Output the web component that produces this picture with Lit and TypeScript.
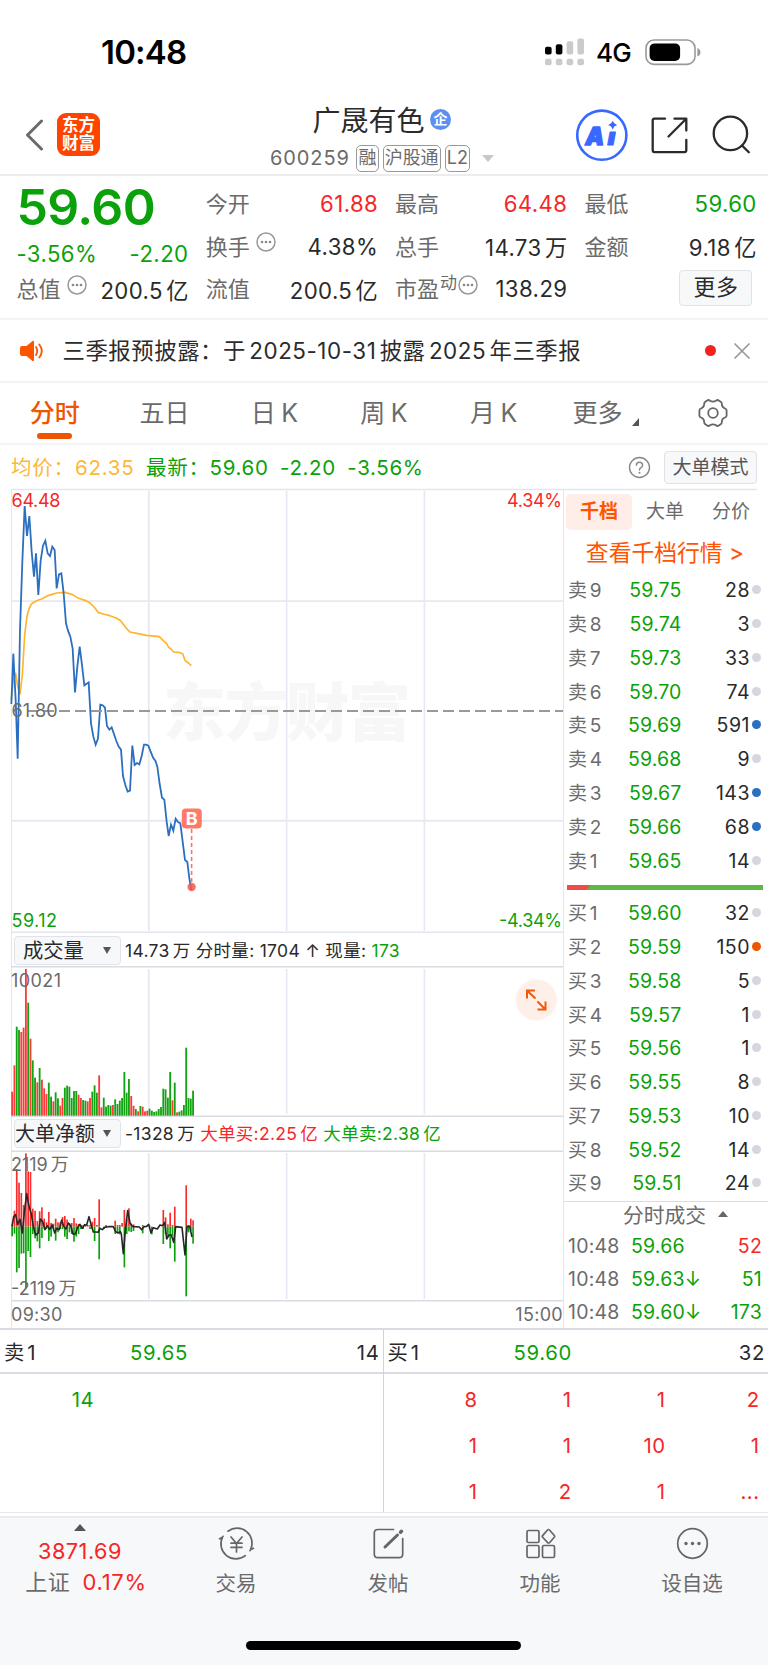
import { LitElement, html, svg, css } from "lit";
import { customElement, property } from "lit/decorators.js";

// Text with a small gap wherever a number meets a Chinese character.
const mix = (t: string) =>
  t.split(/(?<=[0-9A-Za-z])(?=[\u4e00-\u9fff])|(?<=[\u4e00-\u9fff])(?=[0-9A-Za-z])/).map(
    (part, i) => (i ? html`<span class="gap">${part}</span>` : part)
  );

const shared = css`
  * { box-sizing: border-box; }
  .gap { margin-left: 0.15em; }
  .red { color: #f62626; }
  .green { color: #0ba10b; }
  .dark { color: #2a2a2a; }
  svg { display: block; flex: none; }
`;

const barX = (i: number) => 36.5 + i * 6.87;

const price =
  "34,672 40,521 47,660 53,836 60,450 67,245 74,78 81,168 88,108 95,215 102,290 108,220 115,345 122,242 129,197 136,182 143,220 150,228 157,200 164,210 170,325 177,283 184,280 191,340 198,430 204,452 211,470 218,506 225,637 232,560 239,500 246,555 253,616 260,611 266,607 273,730 280,770 287,794 294,776 301,674 308,676 315,683 321,738 328,749 335,742 342,762 349,783 356,800 363,809 369,888 376,915 383,935 390,932 397,797 404,855 411,849 418,853 425,828 432,794 438,794 445,797 452,815 459,833 466,842 472,860 479,912 486,953 493,959 500,1025 506,1068 513,1034 520,1052 527,1016 534,1026 541,1030 548,1085 555,1140 562,1146 568,1195 574,1230";
const average =
  "34,660 40,600 47,580 53,620 60,642 67,585 74,465 81,408 88,384 95,371 105,365 115,360 125,357 143,347 157,343 170,339 195,337 218,344 232,353 245,358 258,362 270,369 285,384 294,397 310,402 330,407 350,415 362,422 370,433 380,446 390,456 410,460 440,466 478,470 490,482 500,491 506,502 513,507 521,516 540,518 548,521 555,541 565,549 574,557";
const volume =
  "r503 r424 g308 g318 r324 r311 r135 g236 r344 g409 g461 r475 g432 r467 r493 r510 g476 g518 r532 g505 g523 r545 r522 g491 g485 g488 g522 g501 g501 r512 r522 g528 g530 r532 r522 g503 g484 g506 r454 r550 g521 g548 g543 g545 r543 g526 g540 g530 g522 g444 g506 g465 r516 r545 g555 r562 g546 r548 r562 r560 g554 g560 g564 g562 g555 g549 g494 g496 g521 g444 r529 g476 r565 g563 g559 g543 g371 g522 g524 g500".split(" ");
const flow: Record<number, [number, number]> = {
  0: [318, 352], 1: [275, 344], 2: [150, 460], 3: [191, 447], 4: [222, 404], 5: [258, 403], 6: [103, 508], 7: [157, 396],
  8: [159, 414], 9: [269, 345], 10: [275, 358], 11: [306, 367], 12: [277, 388], 13: [265, 357], 14: [299, 328], 15: [310, 330],
  16: [279, 366], 17: [312, 353], 18: [314, 330], 19: [299, 365], 20: [310, 340], 21: [310, 330], 22: [294, 330], 23: [291, 353],
  24: [302, 360], 25: [312, 340], 26: [312, 345], 27: [297, 368], 28: [313, 353], 29: [315, 345], 30: [318, 330], 31: [318, 330],
  32: [318, 323], 33: [318, 323], 34: [318, 330], 35: [308, 330], 36: [297, 366], 37: [318, 323], 38: [241, 421], 40: [323, 330],
  41: [318, 326], 45: [305, 345], 46: [318, 342], 47: [318, 346], 48: [312, 323], 49: [273, 445], 50: [300, 345], 51: [268, 337],
  52: [314, 339], 53: [316, 336], 57: [318, 343], 60: [320, 323], 61: [323, 346], 66: [273, 375], 67: [295, 345], 68: [316, 350],
  69: [281, 388], 70: [318, 350], 71: [263, 428], 76: [199, 532], 77: [318, 340], 78: [299, 335], 79: [304, 374],
};
const net =
  "36,322 41,293 47,287 53,316 60,301 67,342 73,280 80,224 87,262 94,285 100,322 107,348 115,342 121,300 128,308 135,332 142,320 149,331 157,318 164,342 170,328 178,332 185,303 191,322 198,330 205,312 212,320 219,345 226,345 233,325 240,316 247,328 254,317 260,318 267,293 273,316 280,339 287,339 294,340 300,328 307,332 314,325 325,323 340,323 347,338 354,342 361,338 364,345 370,404 376,335 383,275 390,312 397,322 405,323 418,324 425,332 432,323 440,322 446,316 453,342 460,326 472,330 480,318 488,320 494,310 500,360 507,348 514,348 521,370 527,323 546,325 555,408 561,323 569,322 576,354";

@customElement("info-dot")
class InfoDot extends LitElement {
  static styles = css`:host { display: block; flex: none; } svg { display: block; }`;
  render() {
    return html`<svg width="20" height="20" viewBox="0 0 20 20"><circle cx="10" cy="10" r="9" fill="none" stroke="#999" stroke-width="1.5" /><g fill="#888"><circle cx="6" cy="10" r="1.3" /><circle cx="10" cy="10" r="1.3" /><circle cx="14" cy="10" r="1.3" /></g></svg>`;
  }
}

@customElement("status-bar")
class StatusBar extends LitElement {
  static styles = [shared, css`
    :host { display: flex; height: 96px; padding: 8px 67px 0 101px; align-items: center; color: #000; }
    .time { font-size: 33px; font-weight: 600; letter-spacing: -0.8px; flex: 1; }
    .net { font-size: 26px; font-weight: 500; margin: 1px 14px 0 12px; letter-spacing: -0.7px; }
  `];
  render() {
    const xs = [0, 10.8, 21.6, 32.4];
    return html`
      <div class="time">10:48</div>
      <svg width="39" height="28" viewBox="0 0 39 28">
        ${xs.map((x, i) => svg`<rect x=${x} y=${[8.8, 6.2, 3.2, 0.4][i]} width="6.6" height=${[7.6, 10.2, 13.2, 16][i]} rx="2" fill=${i < 2 ? "#000" : "#cbcbcb"} /><rect x=${x} y="20.8" width="6.6" height="6.4" rx="2" fill="#cbcbcb" />`)}
      </svg>
      <div class="net">4G</div>
      <svg width="56" height="27" viewBox="0 0 56 27">
        <rect x="1" y="1" width="49" height="24.4" rx="8" fill="none" stroke="#999" stroke-width="1.6" />
        <rect x="4.6" y="4.4" width="30.5" height="17.6" rx="5" fill="#000" />
        <path d="M52.4 9v8.6q3-1.2 3-4.3t-3-4.3z" fill="#999" />
      </svg>`;
  }
}

@customElement("stock-header")
class StockHeader extends LitElement {
  static styles = [shared, css`
    :host { display: grid; grid-template-columns: 200px 1fr 200px; height: 80px; border-bottom: 2px solid #ececee; }
    .left { display: flex; align-items: center; padding: 0 0 1px 25px; }
    .logo { margin-left: 14px; width: 43px; height: 43px; border-radius: 9px; background: #ff4400; color: #fff; font-size: 16.5px; font-weight: 700; line-height: 17.5px; text-align: center; padding: 4px 2px 0; }
    .center { display: flex; flex-direction: column; }
    .name { display: flex; align-items: center; gap: 5.5px; height: 40px; padding: 6px 0 0 112.5px; font-size: 28px; color: #2b2b2b; }
    .badge { width: 21px; height: 21px; border-radius: 50%; background: #5b8ff0; color: #fff; font-size: 14px; font-weight: 700; line-height: 20px; text-align: center; margin-top: 1px; }
    .code { display: flex; align-items: center; height: 30px; margin-top: 7px; padding-left: 70px; font-size: 20px; color: #6b6b6b; letter-spacing: 0.9px; }
    .tag { height: 27px; border: 1.4px solid #999; border-radius: 5px; padding: 0 1.2px; margin-left: 4px; font-size: 18px; line-height: 24px; letter-spacing: -0.1px; }
    .tag.first { margin-left: 6.5px; }
    .tri { margin-left: 12px; }
    .ai { font: italic 900 24px Inter, sans-serif; }
  `];
  render() {
    return html`
      <div class="left">
        <svg width="18" height="32" viewBox="0 0 18 32"><path d="M16.5 2 2.5 16l14 14" fill="none" stroke="#6b6b6b" stroke-width="3" stroke-linecap="round" stroke-linejoin="round" /></svg>
        <div class="logo">东方<br />财富</div>
      </div>
      <div class="center">
        <div class="name">广晟有色<span class="badge">企</span></div>
        <div class="code">600259<span class="tag first">融</span><span class="tag">沪股通</span><span class="tag">L2</span>
          <svg class="tri" width="12" height="7" viewBox="0 0 12 7"><path d="M0 0h12l-6 7z" fill="#c8c8c8" /></svg>
        </div>
      </div>
      <svg width="200" height="78" viewBox="568 96 200 78" fill="none" stroke="#2b2b2b" stroke-width="2.3" stroke-linecap="round" stroke-linejoin="round">
        <circle cx="601.8" cy="135.2" r="24.6" stroke="#3868ff" stroke-width="2.6" />
        <g fill="#3868ff" stroke="#3868ff" stroke-width="1">
          <text class="ai" x="585.5" y="144.6" textLength="18.5" lengthAdjust="spacingAndGlyphs" stroke-width="1.6">A</text>
          <text class="ai" x="607.5" y="145.3" textLength="8" lengthAdjust="spacingAndGlyphs">ı</text>
          <path stroke="none" d="M612.7 120.800q1 3.300 4.400 4.300-3.400 1-4.400 4.300-1-3.300-4.400-4.300 3.400-1 4.400-4.300z" />
        </g>
        <path d="M665 118.700h-10.500q-1.800 0-1.800 1.800v29.800q0 1.800 1.800 1.800h30q1.800 0 1.800-1.800v-10.500M674.500 118.700h11.800v11.800M686 119l-17.500 17.500" />
        <circle cx="730.400" cy="133.400" r="16.700" />
        <path d="M742 145.500l6.800 6.800" />
      </svg>`;
  }
}

@customElement("quote-panel")
class QuotePanel extends LitElement {
  static styles = [shared, css`
    :host { display: grid; grid-template-columns: repeat(4, 172px); column-gap: 17.300px; grid-template-rows: repeat(3, 42.500px); height: 144px; padding: 7px 11px 0 16.500px; border-bottom: 2px solid #f4f4f6; font-size: 22.200px; letter-spacing: 0.400px; color: #6b6b6b; }
    .big { grid-column: 1; grid-row: 1 / 3; display: flex; flex-direction: column; }
    .price { font-size: 50px; font-weight: 600; line-height: 48px; letter-spacing: -0.600px; }
    .change { display: flex; justify-content: space-between; margin-top: 9px; line-height: 28px; }
    .cell { display: flex; align-items: center; justify-content: space-between; white-space: nowrap; }
    .label { display: flex; align-items: center; font-size: 22px; letter-spacing: 0; padding-bottom: 4px; }
    .label info-dot { margin: -5px 0 0 6px; }
    .sup { font-size: 17px; margin: -12px -5px 0 1px; }
    .value { margin-right: -0.400px; padding-bottom: 1px; }
    .more { justify-content: flex-end; padding-right: 4px; }
    .btn { width: 73px; height: 36px; background: #f7f8fa; border: 1.500px solid #e0e2e8; border-radius: 4px; text-align: center; line-height: 33px; font-size: 22px; color: #2a2a2a; margin-top: -2px; }
  `];
  cell(label: string, value: string, tone = "dark", dot = false, sup = "") {
    return html`<div class="cell"><span class="label">${label}${sup ? html`<span class="sup">${sup}</span>` : ""}${dot ? html`<info-dot></info-dot>` : ""}</span><span class="value ${tone}">${mix(value)}</span></div>`;
  }
  render() {
    return html`
      <div class="big green"><div class="price">59.60</div><div class="change"><span>-3.56%</span><span>-2.20</span></div></div>
      ${this.cell("今开", "61.88", "red")}${this.cell("最高", "64.48", "red")}${this.cell("最低", "59.60", "green")}
      ${this.cell("换手", "4.38%", "dark", true)}${this.cell("总手", "14.73万")}${this.cell("金额", "9.18亿")}
      ${this.cell("总值", "200.5亿", "dark", true)}${this.cell("流值", "200.5亿")}${this.cell("市盈", "138.29", "dark", true, "动")}
      <div class="cell more"><div class="btn">更多</div></div>`;
  }
}

@customElement("notice-bar")
class NoticeBar extends LitElement {
  static styles = [shared, css`
    :host { display: flex; align-items: center; height: 63px; padding: 0 18px 0 20px; border-bottom: 2px solid #f4f4f6; font-size: 22.400px; color: #2b2b2b; }
    .text { flex: 1; margin-left: 18.500px; letter-spacing: 0.540px; padding-bottom: 4px; }
    .dot { width: 11px; height: 11px; border-radius: 50%; background: #f52020; margin-right: 18px; }
  `];
  render() {
    return html`
      <svg width="24" height="22" viewBox="0 0 24 22"><path d="M2 6h4.500l6-5q1.500-.6 1.500 1v18q0 1.600-1.500 1l-6-5H2q-2 0-2-2V8q0-2 2-2z" fill="#fe5400" /><path d="M16 7q2.500 4 0 8M19.300 4.500q5 6.500 0 13" fill="none" stroke="#fe5400" stroke-width="1.800" stroke-linecap="round" /></svg>
      <div class="text">${mix("三季报预披露：于2025-10-31披露2025年三季报")}</div>
      <div class="dot"></div>
      <svg width="16" height="16" viewBox="-1 -1 16 16"><path d="M0 0l14 14M14 0 0 14" stroke="#999" stroke-width="1.700" stroke-linecap="round" /></svg>`;
  }
}

@customElement("period-tabs")
class PeriodTabs extends LitElement {
  static styles = [shared, css`
    :host { display: grid; grid-template-columns: repeat(7, 1fr); height: 62px; border-bottom: 2px solid #f4f4f6; font-size: 25px; color: #6b6b6b; }
    .tab { display: flex; flex-direction: column; align-items: center; justify-content: flex-end; padding-bottom: 4px; gap: 2px; }
    .name { display: flex; align-items: flex-end; line-height: 36px; }
    .gap { margin-left: 0.220em; }
    .line { width: 35px; height: 6px; border-radius: 3px; }
    .on { color: #ee5500; font-weight: 500; }
    .on .line { background: #ee5500; }
    .corner { margin: 0 -5px 5px 10px; }
  `];
  render() {
    return html`
      ${["分时", "五日", "日K", "周K", "月K", "更多"].map((t, i) => html`
        <div class="tab ${i === 0 ? "on" : ""}"><div class="name">${mix(t)}${i === 5 ? html`<svg class="corner" width="7" height="8" viewBox="0 0 7 8"><path d="M7 0v8H0z" fill="#555" /></svg>` : ""}</div><div class="line"></div></div>`)}
      <div class="tab"><div class="name"><svg width="30" height="36" viewBox="-15 -18 30 36" fill="none" stroke="#666" stroke-width="1.800" stroke-linejoin="round">
        <path d="M-5.800-12.500Q-4.500-13.500-3-12.300Q0-10.500 3-12.300Q4.500-13.500 5.800-12.500L8-11Q9-10.300 8.800-8.800Q9-5.500 12-4.500Q13.600-4 13.600-2.500V2.500Q13.600 4 12 4.500Q9 5.500 8.800 8.800Q9 10.300 8 11L5.800 12.500Q4.500 13.500 3 12.300Q0 10.500-3 12.300Q-4.500 13.500-5.800 12.500L-8 11Q-9 10.300-8.800 8.800Q-9 5.500-12 4.500Q-13.600 4-13.600 2.500V-2.500Q-13.600-4-12-4.500Q-9-5.500-8.800-8.800Q-9-10.300-8-11Z" /><circle r="4.800" /></svg></div><div class="line"></div></div>`;
  }
}

@customElement("summary-row")
class SummaryRow extends LitElement {
  static styles = [shared, css`
    :host { display: flex; align-items: center; height: 44px; padding: 1px 11px 0; gap: 13px; }
    .figures { flex: 1; display: flex; align-items: baseline; gap: 11.500px; font-size: 20.500px; letter-spacing: 0.650px; padding-bottom: 3px; }
    .avg { color: #fdb73a; letter-spacing: 0.800px; }
    .btn { width: 93px; height: 33px; background: #f7f8fa; border: 1.500px solid #e0e2e8; border-radius: 4px; text-align: center; line-height: 32px; font-size: 19px; color: #555; }
  `];
  render() {
    return html`
      <div class="figures green"><span class="avg">均价：62.35</span><span>最新：59.60</span><span>-2.20</span><span>-3.56%</span></div>
      <svg width="23" height="23" viewBox="0 0 23 23"><circle cx="11.500" cy="11.500" r="10" fill="none" stroke="#888" stroke-width="1.400" /><path d="M8.400 9.300q0-3 3.100-3t3.100 2.900q0 1.500-1.600 2.500t-1.500 2.300" fill="none" stroke="#888" stroke-width="1.400" stroke-linecap="round" /><circle cx="11.500" cy="16.800" r="1" fill="#888" /></svg>
      <div class="btn">大单模式</div>`;
  }
}

@customElement("chart-column")
class ChartColumn extends LitElement {
  static styles = [shared, css`
    :host { display: flex; flex-direction: column; width: 552px; margin-left: 11px; border-left: 1px solid #e3e6ee; }
    svg { overflow: visible; }
    .bar { display: flex; align-items: center; height: 35px; font-size: 17.500px; letter-spacing: 0.300px; padding-left: 2px; gap: 4px; color: #2a2a2a; white-space: nowrap; }
    .bar.short { height: 34px; }
    .info, .title { padding-bottom: 2px; }
    .bar .gap { margin-left: 0.180em; }
    .pick { display: flex; align-items: center; justify-content: space-between; width: 107px; height: 29px; background: #f7f8fa; border: 1.500px solid #e0e2e8; border-radius: 4px; font-size: 20.300px; letter-spacing: 0; padding: 0 9px 0 8px; }
    .pick.tight { padding-left: 0; font-size: 20px; }
    .title { margin-right: -10px; }
    .time { display: flex; justify-content: space-between; height: 28px; align-items: center; font-size: 18px; letter-spacing: 0.300px; color: #6b6b6b; margin-left: -1px; }
    .lbl { font-family: Inter, "Noto Sans CJK SC", sans-serif; font-size: 18px; }
    .mark { font-family: "Noto Sans CJK SC", sans-serif; font-size: 63px; font-weight: 900; }
    .b { font: 700 18px Inter, sans-serif; }
  `];
  grid(top: number, h: number) {
    return svg`<path d="M148.800 ${top + 2}v${h - 4}M286.600 ${top + 2}v${h - 4}M424.400 ${top + 2}v${h - 4}" stroke="#e6e9f1" stroke-width="1.700" />`;
  }
  render() {
    return html`
      <svg width="551" height="444" viewBox="12 489 551 444">
        <path d="M11 489.500H757M11 932.300H563" stroke="#e3e6ee" stroke-width="1.500" />
        <text class="mark" x="163" y="735" textLength="248" fill="#f7f7f7">东方财富</text>
        ${this.grid(489, 444)}
        <path d="M11 601.100H563M11 820.700H563" stroke="#e6e9f1" stroke-width="1.900" />
        <g transform="translate(0 480) scale(.33333)" fill="none" stroke-linejoin="round">
          <polyline points=${average} stroke="#ffb42c" stroke-width="5" />
          <polyline points=${price} stroke="#2b6fc0" stroke-width="5.400" stroke-linejoin="miter" />
        </g>
        <path d="M27 711H563" stroke="#999" stroke-width="1.900" stroke-dasharray="11 5" />
        <text class="lbl" x="11.500" y="507" fill="#f62626" textLength="49">64.48</text>
        <text class="lbl" x="507" y="507" fill="#f62626" textLength="55">4.34%</text>
        <text class="lbl" x="11.500" y="716.500" fill="#6b6b6b" textLength="46">61.80</text>
        <text class="lbl" x="11.500" y="926.500" fill="#0ba10b" textLength="45.500">59.12</text>
        <text class="lbl" x="499" y="926.500" fill="#0ba10b" textLength="63">-4.34%</text>
        <path d="M191.600 829v56" stroke="#fa7466" stroke-width="1.600" stroke-dasharray="4 3" />
        <circle cx="191.600" cy="887" r="4.200" fill="#f05a50" fill-opacity=".85" />
        <rect x="181.800" y="808.500" width="20" height="20" rx="4" fill="#ff7a68" />
        <text class="b" x="191.700" y="825.100" text-anchor="middle" fill="#fff">B</text>
      </svg>
      <div class="bar"><div class="pick"><span class="title">成交量</span><svg width="8" height="7" viewBox="0 0 8 7"><path d="M0 0h8L4 7z" fill="#555" /></svg></div><span class="info">${mix("14.73万")} 分时量: 1704 ↑ 现量: <span class="green">173</span></span></div>
      <svg width="551" height="150" viewBox="12 968 551 150">
        <path d="M11 967.700H563M11 1117.300H563" stroke="#d9dce3" stroke-width="1.500" />
        ${this.grid(968, 149)}
        <g transform="translate(0 925) scale(.33333)">
          ${volume.map((v, i) => svg`<rect x=${barX(i) - 2.8} y=${v.slice(1)} width="5.500" height=${575 - +v.slice(1)} fill=${v[0] === "r" ? "#fb3a3a" : "#12a312"} />`)}
        </g>
        <text class="lbl" x="11" y="987.700" fill="#6b6b6b" textLength="50">10021</text>
        <circle cx="536.300" cy="1000.800" r="20.500" fill="#feefe8" />
        <path d="M527 999.500v-8h8M527.500 992l8 7.500M537.500 1002.500l7.500 7.500M545.500 1002.500v8h-8" fill="none" stroke="#f25a0a" stroke-width="2" />
      </svg>
      <div class="bar short"><div class="pick tight"><span class="title">大单净额</span><svg width="8" height="7" viewBox="0 0 8 7"><path d="M0 0h8L4 7z" fill="#555" /></svg></div><span class="info">${mix("-1328万")} <span class="red">${mix("大单买:2.25亿")}</span> <span class="green">${mix("大单卖:2.38亿")}</span></span></div>
      <svg width="551" height="150" viewBox="12 1152 551 150">
        <path d="M11 1152.200H563M11 1301.800H563" stroke="#d9dce3" stroke-width="1.500" />
        ${this.grid(1152, 150)}
        <g transform="translate(0 1120) scale(.33333)">
          ${Object.entries(flow).map(([i, [up, down]]) => svg`<rect x=${barX(+i) - 2.5} y=${up} width="5" height=${Math.max(0, 323 - up)} fill="#f92b2b" /><rect x=${barX(+i) - 2.5} y="323" width="5" height=${down - 323} fill="#0ba10b" />`)}
          <polyline points=${net} fill="none" stroke="#262626" stroke-width="4.800" stroke-linejoin="round" />
        </g>
        <text class="lbl" x="11" y="1172.300" fill="#6b6b6b">2119<tspan dx="3">万</tspan></text>
        <text class="lbl" x="11" y="1295.500" fill="#6b6b6b">-2119<tspan dx="3">万</tspan></text>
      </svg>
      <div class="time"><span>09:30</span><span>15:00</span></div>`;
  }
}

@customElement("order-book")
class OrderBook extends LitElement {
  static styles = [shared, css`
    :host { flex: 1; display: flex; flex-direction: column; border-left: 1.500px solid #e3e6ee; font-size: 19.500px; color: #6b6b6b; padding-top: 5px; }
    .tabs { display: grid; grid-template-columns: repeat(3, 1fr); height: 36px; line-height: 36px; text-align: center; padding: 0 4px 0 2px; font-size: 19px; }
    .on { background: #feeee7; color: #ff5500; border-radius: 5px; font-weight: 700; }
    .link { height: 43px; line-height: 45px; text-align: center; font-size: 22.800px; color: #ff5500; padding-right: 2px; }
    .row { display: grid; grid-template-columns: 60px 53.500px 1fr 10px; height: 34px; align-items: center; padding: 1px 8px 0 4px; }
    .side { font-size: 19px; padding-bottom: 3px; }
    .num { text-align: right; letter-spacing: 0.150px; }
    .qty { letter-spacing: 0.500px; }
    .dot { width: 9px; height: 9px; border-radius: 50%; background: #d4d7de; margin: 0 0 1px 1.500px; }
    .blue { background: #2b6fc0; }
    .orange { background: #ee5500; }
    .ratio { display: flex; flex: none; height: 5px; margin: 8px 5px 6px 3px; background: #5cb947; }
    .sell { width: 12%; background: #ee4b4b; clip-path: polygon(0 0, 100% 0, 82% 100%, 0 100%); }
    .deals { display: flex; justify-content: center; align-items: center; gap: 12px; height: 29px; margin-top: 1px; padding: 0 0 3px 19px; border-top: 1.500px solid #d9dce3; font-size: 20.800px; }
    .deal { display: grid; grid-template-columns: 63px 1fr auto; height: 33px; align-items: center; padding: 0 6px 0 4px; letter-spacing: 0.200px; }
  `];
  row(side: string, price: string, qty: number) {
    const tone = qty < 100 && qty !== 68 ? "" : side[0] === "卖" ? "blue" : "orange";
    return html`<div class="row"><span class="side">${mix(side)}</span><span class="num green">${price}</span><span class="num qty dark">${qty}</span><span class="dot ${tone}"></span></div>`;
  }
  render() {
    const sells: [string, number][] = [["59.75", 28], ["59.74", 3], ["59.73", 33], ["59.70", 74], ["59.69", 591], ["59.68", 9], ["59.67", 143], ["59.66", 68], ["59.65", 14]];
    const buys: [string, number][] = [["59.60", 32], ["59.59", 150], ["59.58", 5], ["59.57", 1], ["59.56", 1], ["59.55", 8], ["59.53", 10], ["59.52", 14], ["59.51", 24]];
    const deals = [["59.66", "52", "red"], ["59.63↓", "51", "green"], ["59.60↓", "173", "green"]];
    return html`
      <div class="tabs"><span class="on">千档</span><span>大单</span><span>分价</span></div>
      <div class="link">查看千档行情 &gt;</div>
      ${sells.map(([p, q], i) => this.row(`卖${9 - i}`, p, q))}
      <div class="ratio"><div class="sell"></div></div>
      ${buys.map(([p, q], i) => this.row(`买${i + 1}`, p, q))}
      <div class="deals">分时成交<svg width="10" height="6" viewBox="0 0 10 6"><path d="M0 6h10L5 0z" fill="#666" /></svg></div>
      ${deals.map(([p, q, tone]) => html`<div class="deal"><span>10:48</span><span class="green">${p}</span><span class=${tone}>${q}</span></div>`)}`;
  }
}

@customElement("queue-side")
class QueueSide extends LitElement {
  @property() name = "";
  @property() price = "";
  @property() total = "";
  @property() tone = "";
  @property({ attribute: false }) items: string[] = [];
  static styles = [shared, css`
    :host { display: flex; flex-direction: column; font-size: 20.300px; letter-spacing: 0.500px; }
    .head { display: grid; flex: none; grid-template-columns: 126px 1fr auto; align-items: center; height: 44px; border-bottom: 2px solid #d9dce3; padding: 3px 3px 0 4px; color: #2a2a2a; letter-spacing: 0.700px; }
    .side { padding-bottom: 3px; letter-spacing: 0; }
    .list { display: grid; grid-template-columns: repeat(4, 94px); grid-auto-rows: 46.200px; align-items: center; text-align: right; padding-top: 2px; }
  `];
  render() {
    return html`<div class="head"><span class="side">${mix(this.name)}</span><span class="green">${this.price}</span><span>${this.total}</span></div>
      <div class="list ${this.tone}">${this.items.map((v) => html`<span>${v}</span>`)}</div>`;
  }
}

@customElement("bottom-bar")
class BottomBar extends LitElement {
  static styles = [shared, css`
    :host { display: flex; flex-direction: column; flex: 1; background: #f7f8fa; border-top: 2px solid #e9eaec; color: #6b6b6b; font-size: 20.500px; }
    .items { display: grid; grid-template-columns: 160px repeat(4, 152px); height: 82px; }
    .item { display: flex; flex-direction: column; align-items: center; }
    .item svg { margin-top: 8px; }
    .label { height: 30px; line-height: 30px; margin-top: 8px; }
    .item svg.up { margin-top: 6px; }
    .idx { line-height: 32px; height: 31px; margin-top: 4px; font-size: 21.700px; letter-spacing: 0.500px; }
    .line { margin-top: 1px; height: 30px; line-height: 30px; display: flex; gap: 12px; padding-left: 12px; font-size: 22px; letter-spacing: 0.700px; }
    .market { color: #6b6b6b; }
    .home { width: 275px; height: 9px; border-radius: 5px; background: #000; margin: 41px auto 0 246px; }
  `];
  item(label: string, icon: unknown) {
    return html`<div class="item"><svg width="37" height="35" viewBox="-18.500 -17.500 37 35" fill="none" stroke="#666" stroke-width="1.700" stroke-linecap="round" stroke-linejoin="round">${icon}</svg><div class="label">${label}</div></div>`;
  }
  render() {
    return html`
      <div class="items">
        <div class="item red"><svg class="up" width="12" height="7" viewBox="0 0 12 7"><path d="M0 7h12L6 0z" fill="#555" /></svg><div class="idx">3871.69</div><div class="line"><span class="market">上证</span><span>0.17%</span></div></div>
        ${this.item("交易", svg`<path d="M-8.500-12.300A15 15 0 0 1 14 6.300L17 4.800M14 6.300L13.500 7.200M8.800 12.100A15 15 0 0 1-14-6.300L-17-4.800M-14-6.300L-13.500-7.200M-5.500-6.500L0 0L5.500-6.500M0 0V8.500M-5.500-.3H5.500M-5.500 3.900H5.500" />`)}
        ${this.item("发帖", svg`<path d="M5-14H-10.500Q-14.200-14-14.200-10.500V10.500Q-14.200 14.200-10.500 14.200H10.500Q14.200 14.200 14.200 10.500V-5" /><path d="M-3.500 3.500L9-8.500" stroke-width="3" /><path d="M12-11.300l1-1" stroke-width="3.400" />`)}
        ${this.item("功能", svg`<rect x="-13.500" y="-13" width="12" height="12" rx="1.500" /><rect x="-13.500" y="2" width="12" height="12" rx="1.500" /><rect x="2" y="2" width="12" height="12" rx="1.500" /><path d="M7.900-14Q8.500-14 9-13.500L14-7.700Q14.400-7 14-6.500L9-.8Q8-.2 7.200-.8L1.900-6.500Q1.400-7 1.900-7.600L7-13.500Q7.400-14 7.900-14Z" />`)}
        ${this.item("设自选", svg`<circle r="14.800" /><g fill="#666" stroke="none"><circle cx="-6.500" r="1.700" /><circle r="1.700" /><circle cx="6.500" r="1.700" /></g>`)}
      </div>
      <div class="home"></div>`;
  }
}

@customElement("app-root")
class AppRoot extends LitElement {
  static styles = [shared, css`
    :host { display: flex; flex-direction: column; width: 768px; height: 1665px; background: #fff; font-family: Inter, "Noto Sans CJK SC", sans-serif; overflow: hidden; }
    .market { display: flex; height: 839px; }
    .queue { display: grid; grid-template-columns: 382.500px 385.500px; height: 187.500px; border-top: 2px solid #d9dce3; }
    .queue queue-side { height: 182.500px; border-bottom: 1.500px solid #e6e8ee; }
    .queue .buy { border-left: 1.500px solid #cfd3de; }
  `];
  render() {
    return html`
      <status-bar></status-bar>
      <stock-header></stock-header>
      <quote-panel></quote-panel>
      <notice-bar></notice-bar>
      <period-tabs></period-tabs>
      <summary-row></summary-row>
      <div class="market"><chart-column></chart-column><order-book></order-book></div>
      <div class="queue">
        <queue-side name="卖1" price="59.65" total="14" tone="green" .items=${["14"]}></queue-side>
        <queue-side class="buy" name="买1" price="59.60" total="32" tone="red" .items=${["8", "1", "1", "2", "1", "1", "10", "1", "1", "2", "1", "..."]}></queue-side>
      </div>
      <bottom-bar></bottom-bar>`;
  }
}
